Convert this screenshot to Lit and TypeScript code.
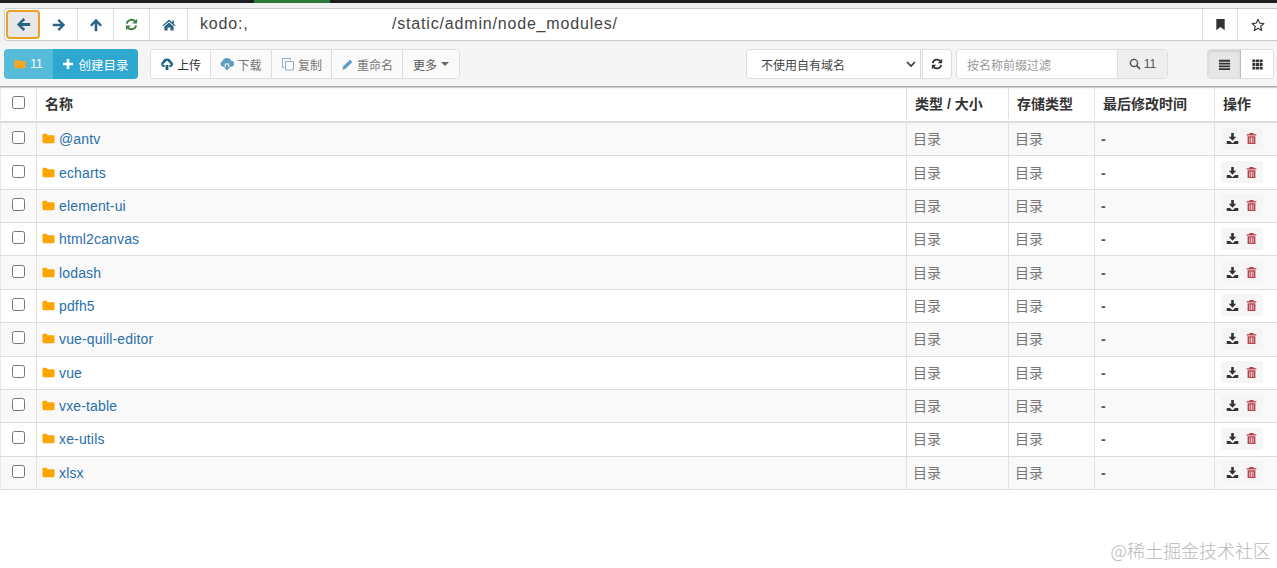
import { LitElement, html, css, svg } from "lit";
import { customElement } from "lit/decorators.js";

const ic = (body: unknown, size = 14, cls = "") =>
  html`<svg class="ic ${cls}" width=${size} height=${size} viewBox="0 0 14 14" aria-hidden="true">${body}</svg>`;

const P = {
  left: svg`<path fill="currentColor" d="M6.9 1 L.8 7 L6.9 13 L8.6 11.3 L5.4 8.3 H13.2 V5.7 H5.4 L8.6 2.7 Z"/>`,
  right: svg`<path fill="currentColor" d="M7.1 1 L13.2 7 L7.1 13 L5.4 11.3 L8.6 8.3 H.8 V5.7 H8.6 L5.4 2.7 Z"/>`,
  up: svg`<path fill="currentColor" d="M7 .8 L13 6.9 L11.3 8.6 L8.3 5.4 V13.2 H5.7 V5.4 L2.7 8.6 L1 6.9 Z"/>`,
  refresh: svg`<path fill="none" stroke="currentColor" stroke-width="2.1" d="M2 6 A5.2 5.2 0 0 1 11 3.6 M12 8 A5.2 5.2 0 0 1 3 10.4"/><path fill="currentColor" d="M13 .8 V6 H7.8 Z M1 13.2 V8 H6.2 Z"/>`,
  home: svg`<path fill="currentColor" d="M7 1.6 L10.2 4.4 V2.4 H11.8 V5.8 L13.6 7.4 L12.7 8.3 L7 3.4 L1.3 8.3 L.4 7.4 Z M7 4.6 L11.6 8.6 V12.6 H8.4 V9.4 H5.6 V12.6 H2.4 V8.6 Z"/>`,
  bookmark: svg`<path fill="currentColor" d="M2.5 1 H11.5 V13.2 L7 9.6 L2.5 13.2 Z"/>`,
  star: svg`<path fill="none" stroke="currentColor" stroke-width="1.1" stroke-linejoin="round" d="M7 1.2 L8.7 5.1 L12.9 5.5 L9.7 8.3 L10.7 12.5 L7 10.3 L3.3 12.5 L4.3 8.3 L1.1 5.5 L5.3 5.1 Z"/>`,
  folder: svg`<path fill="currentColor" d="M.5 3.2 Q.5 2 1.7 2 H4.8 L6 3.4 H12.3 Q13.5 3.4 13.5 4.6 V10.8 Q13.5 12 12.3 12 H1.7 Q.5 12 .5 10.8 Z"/>`,
  plus: svg`<path fill="currentColor" d="M5.4 1.2 H8.6 V5.4 H12.8 V8.6 H8.6 V12.8 H5.4 V8.6 H1.2 V5.4 H5.4 Z"/>`,
  upload: svg`<path fill="currentColor" d="M3.2 10 A3 3 0 0 1 2.6 4.6 A4.6 4.6 0 0 1 11.2 4.4 A3 3 0 0 1 11 10 H9.4 V7.8 H11.4 L7 3.6 L2.6 7.8 H4.6 V10 Z M5.6 8 H8.4 V13 H5.6 Z"/>`,
  cloudDown: svg`<path fill="currentColor" d="M3.2 9.8 A3 3 0 0 1 2.6 4 A4.6 4.6 0 0 1 11.2 3.8 A3 3 0 0 1 11 9.8 H9.2 V6.6 H4.8 V9.8 Z M5.8 7.4 H8.2 V10 H10 L7 13.4 L4 10 H5.8 Z"/>`,
  copy: svg`<path fill="none" stroke="currentColor" stroke-width="1" d="M9.5 3 V1.5 H1.5 V10.5 H3.5 M4.5 4.5 H12.5 V13 H4.5 Z"/>`,
  pencil: svg`<path fill="currentColor" d="M9.6 1.8 L12.2 4.4 L5 11.6 L1.4 12.6 L2.4 9 Z"/>`,
  search: svg`<circle cx="5.8" cy="5.8" r="4.2" fill="none" stroke="currentColor" stroke-width="1.7"/><path stroke="currentColor" stroke-width="2" d="M8.8 8.8 L12.8 12.8"/>`,
  list: svg`<path fill="currentColor" d="M1 2 H13 V4 H1 Z M1 5 H13 V7 H1 Z M1 8 H13 V10 H1 Z M1 11 H13 V13 H1 Z"/>`,
  th: svg`<path fill="currentColor" d="M1.5 1.5 H4.7 V4.7 H1.5 Z M5.4 1.5 H8.6 V4.7 H5.4 Z M9.3 1.5 H12.5 V4.7 H9.3 Z M1.5 5.4 H4.7 V8.6 H1.5 Z M5.4 5.4 H8.6 V8.6 H5.4 Z M9.3 5.4 H12.5 V8.6 H9.3 Z M1.5 9.3 H4.7 V12.5 H1.5 Z M5.4 9.3 H8.6 V12.5 H5.4 Z M9.3 9.3 H12.5 V12.5 H9.3 Z"/>`,
  save: svg`<path fill="currentColor" d="M5.6 1.2 H8.4 V5.2 H11 L7 9.4 L3 5.2 H5.6 Z M.8 9.6 H4.2 L7 12 L9.8 9.6 H13.2 V12.8 H.8 Z"/>`,
  trash: svg`<path fill="currentColor" d="M5 1 H9 L9.6 2.4 H12.2 V3.8 H1.8 V2.4 H4.4 Z M2.8 4.6 H11.2 V13 H2.8 Z"/><path stroke="#f5f5f5" stroke-width=".8" d="M5.2 6 V11.8 M7 6 V11.8 M8.8 6 V11.8"/>`,
};

const FOLDERS = ["@antv", "echarts", "element-ui", "html2canvas", "lodash", "pdfh5", "vue-quill-editor", "vue", "vxe-table", "xe-utils", "xlsx"];

@customElement("app-root")
export class AppRoot extends LitElement {
  static styles = css`
    :host { display: block; width: 1277px; height: 568px; overflow: hidden; background: #fff; position: relative;
      font-family: "Liberation Sans", "Noto Sans CJK SC", sans-serif; font-size: 14px; color: #333; }
    .ic { display: block; flex: none; }
    .strip { height: 3px; background: #1d1d1d; display: flex; }
    .strip i { display: block; width: 76px; margin-left: 254px; background: #2b7a37; }
    .navwrap { background: #f1f1f1; padding: 5px 0 1px 4px; }
    .nav { display: flex; height: 33px; background: #fff; border: 1px solid #ccc; border-right: 0; border-radius: 4px 0 0 4px; box-sizing: border-box; }
    .nb { display: flex; align-items: center; justify-content: center; border-right: 1px solid #ddd; color: #2a6485; box-sizing: border-box; }
    .back { position: relative; background: #e8e8e8; box-shadow: inset 0 0 0 2px #e5a128; border: 0; border-radius: 4px; margin: 1px; width: 34px; }
    .w35 { width: 37px; } .w36 { width: 36px; } .w38 { width: 38px; }
    .green { color: #3f7f45; }
    .addr { flex: 1; display: flex; align-items: center; padding: 0 0 2px 12px; font-size: 16px; color: #444; letter-spacing: .82px; }
    .addr .scheme { width: 192px; }
    .end { border-left: 1px solid #ddd; display: flex; align-items: center; justify-content: center; color: #333; box-sizing: border-box; }
    .e1 { width: 35px; } .e2 { width: 40px; }

    .bar { display: flex; align-items: center; height: 45px; padding: 0 3px 0 4px; box-sizing: border-box; background: #f5f5f5; border-bottom: 1px solid #aaa; box-shadow: 0 1px 1px #ccc; position: relative; font-size: 12px; }
    .group { display: flex; height: 30px; }
    .cy { display: flex; align-items: center; justify-content: center; gap: 4px; color: #fff; box-sizing: border-box; }
    .cnt { width: 49px; background: #56bad9; border-radius: 4px 0 0 4px; }
    .cnt .ic { color: #f5a623; }
    .mk { width: 85px; background: #2fa8cf; border-radius: 0 4px 4px 0; font-size: 12.5px; }
    .tools { margin-left: 12px; background: #fff; border: 1px solid #ddd; border-radius: 4px; box-sizing: border-box; }
    .t { display: flex; align-items: center; justify-content: center; gap: 3px; border-right: 1px solid #ddd; color: #555; background: #fafafa; box-sizing: border-box; }
    .t:last-child { border-right: 0; border-radius: 0 4px 4px 0; }
    .t.on { color: #333; background: #fff; border-radius: 4px 0 0 4px; }
    .t.on .ic { color: #1f6080; }
    .t.off { color: #777; }
    .t.off .ic { color: #5f9dc0; }
    .t.copy .ic { color: #9ab; }
    .caret { width: 0; height: 0; border: 4px solid transparent; border-top-color: #666; border-bottom: 0; margin-left: 1px; }
    .sp { flex: 1; }
    .sel { width: 175px; height: 30px; background: #fff; border: 1px solid #ddd; border-radius: 3px 0 0 3px; box-sizing: border-box; display: flex; align-items: center; justify-content: space-between; padding: 0 3px 0 14px; color: #444; }
    .chev { fill: none; stroke: #333; stroke-width: 1.6; }
    .rf { width: 30px; height: 30px; margin-left: 1px; background: #fff; border: 1px solid #ddd; border-radius: 0 4px 4px 0; box-sizing: border-box; display: flex; align-items: center; justify-content: center; color: #333; }
    .flt { margin-left: 4px; width: 212px; height: 30px; display: flex; border: 1px solid #ddd; border-radius: 4px; box-sizing: border-box; background: #fff; }
    .flt .ph { flex: 1; display: flex; align-items: center; padding-left: 10px; color: #999; }
    .flt .ad { width: 49px; background: #eee; border-left: 1px solid #ddd; border-radius: 0 4px 4px 0; display: flex; align-items: center; justify-content: center; gap: 3px; color: #555; }
    .views { margin-left: 39px; display: flex; height: 30px; border: 1px solid #ddd; border-radius: 4px; box-sizing: border-box; }
    .v { width: 32px; display: flex; align-items: center; justify-content: center; color: #333; background: #fff; border-radius: 0 4px 4px 0; }
    .v.active { background: #e6e6e6; border-right: 1px solid #bbb; border-radius: 4px 0 0 4px; width: 33px; box-sizing: border-box; box-shadow: inset 0 2px 3px rgba(0,0,0,.1); }

    .head, .row { display: grid; grid-template-columns: 36px 870px 102px 86px 120px 63px; }
    .head { height: 36px; padding-bottom: 2px; border-bottom: 2px solid #ddd; box-sizing: border-box; font-weight: 700; color: #333; font-size: 14px; }
    .row { height: 33.36px; box-sizing: border-box; border-bottom: 1px solid #ddd; color: #777; }
    .row.odd { background: #f9f9f9; }
    .c { display: flex; align-items: center; border-left: 1px solid #e2e2e2; padding-left: 6px; box-sizing: border-box; min-width: 0; }
    .c:first-child { border-left-color: #e8e8e8; padding-left: 11px; }
    .head .c { padding-left: 8px; }
    .head .c:first-child { padding-left: 11px; }
    .chk { appearance: none; margin: 0 0 3px; width: 13px; height: 13px; border: 1px solid #767676; border-radius: 2.5px; background: #fff; flex: none; }
    .head .chk { margin-bottom: 1px; }
    .kind { padding-bottom: 2px; }
    .name { color: #2a6fa8; gap: 3px; padding-left: 5px; letter-spacing: .15px; }
    .name span { margin-left: 1px; }
    .name .ic { color: #ffa500; margin-bottom: 1px; }
    .dash { color: #555; padding-left: 6px; font-weight: 700; }
    .acts { display: flex; align-items: center; gap: 6px; height: 22px; background: #f5f5f5; border-radius: 3px; padding: 0 5px; margin-bottom: 1px; }
    .acts .dl { color: #333; } .acts .rm { color: #b9434a; }
    .mark { position: absolute; right: 6px; bottom: 6px; color: #b9b9b9; font-size: 18px; line-height: 24px; font-family: "Noto Sans CJK SC", sans-serif; font-weight: 300; }
  `;

  render() {
    return html`
      <div class="strip"><i></i></div>
      <div class="navwrap">
        <div class="nav">
          <div class="nb back">${ic(P.left, 15)}</div>
          <div class="nb w35">${ic(P.right, 14)}</div>
          <div class="nb w36">${ic(P.up, 14)}</div>
          <div class="nb w36 green">${ic(P.refresh, 13)}</div>
          <div class="nb w38">${ic(P.home, 14)}</div>
          <div class="addr"><span class="scheme">kodo:,</span><span>/static/admin/node_modules/</span></div>
          <div class="end e1">${ic(P.bookmark, 13)}</div>
          <div class="end e2">${ic(P.star, 14)}</div>
        </div>
      </div>
      <div class="bar">
        <div class="group">
          <div class="cy cnt">${ic(P.folder, 12)}<span>11</span></div>
          <div class="cy mk">${ic(P.plus, 12)}<span>创建目录</span></div>
        </div>
        <div class="group tools">
          <div class="t on" style="width:60px">${ic(P.upload, 14)}<span>上传</span></div>
          <div class="t off" style="width:61px">${ic(P.cloudDown, 14)}<span>下载</span></div>
          <div class="t off copy" style="width:60px">${ic(P.copy, 14)}<span>复制</span></div>
          <div class="t off" style="width:71px">${ic(P.pencil, 13)}<span>重命名</span></div>
          <div class="t" style="width:56px"><span>更多</span><i class="caret"></i></div>
        </div>
        <div class="sp"></div>
        <div class="sel"><span>不使用自有域名</span><svg class="chev" width="12" height="12" viewBox="0 0 12 12"><path d="M2 4 L6 8 L10 4"/></svg></div>
        <div class="rf">${ic(P.refresh, 12)}</div>
        <div class="flt"><div class="ph">按名称前缀过滤</div><div class="ad">${ic(P.search, 12)}<span>11</span></div></div>
        <div class="views">
          <div class="v active">${ic(P.list, 13)}</div>
          <div class="v">${ic(P.th, 13)}</div>
        </div>
      </div>
      <div class="head">
        <div class="c"><input class="chk" type="checkbox" /></div>
        <div class="c">名称</div>
        <div class="c">类型 / 大小</div>
        <div class="c">存储类型</div>
        <div class="c">最后修改时间</div>
        <div class="c">操作</div>
      </div>
      ${FOLDERS.map((f, i) => html`
        <div class="row ${i % 2 === 0 ? "odd" : ""}">
          <div class="c"><input class="chk" type="checkbox" /></div>
          <div class="c name">${ic(P.folder, 13)}<span>${f}</span></div>
          <div class="c kind">目录</div>
          <div class="c kind">目录</div>
          <div class="c dash">-</div>
          <div class="c"><div class="acts"><span class="dl">${ic(P.save, 13)}</span><span class="rm">${ic(P.trash, 13)}</span></div></div>
        </div>`)}
      <div class="mark">@稀土掘金技术社区</div>
    `;
  }
}
